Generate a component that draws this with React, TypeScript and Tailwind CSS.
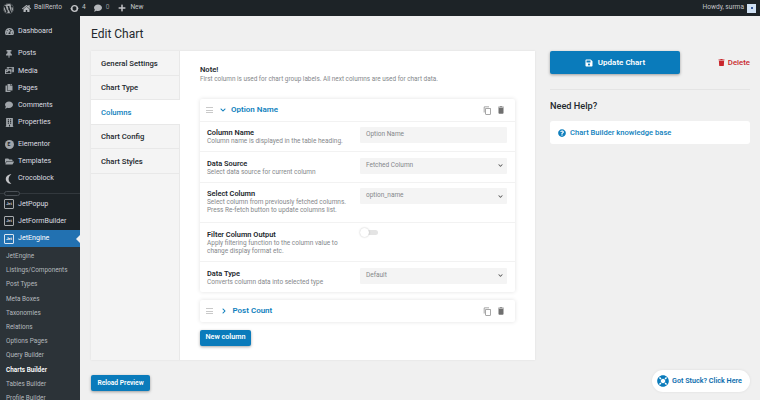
import { ReactNode } from "react";
import {
  FaWordpress,
  FaHome,
  FaComment,
  FaPlus,
  FaThumbtack,
  FaPhotoVideo,
  FaFolderOpen,
  FaBuilding,
  FaSave,
  FaQuestionCircle,
  FaTrash,
  FaCopy,
  FaTachometerAlt,
  FaChevronDown,
  FaChevronRight,
  FaLifeRing,
} from "react-icons/fa";
import { MdContentCopy, MdDelete } from "react-icons/md";

const sans = "font-['Roboto',sans-serif]";

function JetBox({ light }: { light?: boolean }) {
  return (
    <span
      className={
        "flex h-[10px] w-[10px] items-center justify-center rounded-[1px] border text-[4px] leading-none font-bold " +
        (light ? "border-[#dbe6f0] text-white" : "border-[#a7aaad] text-[#c3c4c7]")
      }
    >
      Jet
    </span>
  );
}

function MenuItem({ icon, label, active }: { icon: ReactNode; label: string; active?: boolean }) {
  return (
    <div
      className={
        "relative flex h-[17.2px] items-center gap-[4px] pl-[4px] text-[7.1px] " +
        (active ? "bg-[#2271b1] text-white" : "text-[#dcdde0]")
      }
    >
      <span className="flex w-[10px] justify-center text-[#a0a5aa]">{icon}</span>
      <span>{label}</span>
      {active && (
        <span className="absolute top-[5px] right-0 h-0 w-0 border-y-[4px] border-r-[4px] border-y-transparent border-r-[#f0f0f1]" />
      )}
    </div>
  );
}

function Sidebar() {
  const sub = [
    "JetEngine",
    "Listings/Components",
    "Post Types",
    "Meta Boxes",
    "Taxonomies",
    "Relations",
    "Options Pages",
    "Query Builder",
    "Charts Builder",
    "Tables Builder",
    "Profile Builder",
  ];
  return (
    <aside className="w-[80px] shrink-0 bg-[#1d2327] pt-[7px]">
      <MenuItem icon={<FaTachometerAlt size={9} />} label="Dashboard" />
      <div className="mt-[5px]">
        <MenuItem icon={<FaThumbtack size={8} />} label="Posts" />
        <MenuItem icon={<FaPhotoVideo size={9} />} label="Media" />
        <MenuItem icon={<FaCopy size={8} />} label="Pages" />
        <MenuItem icon={<FaComment size={8} />} label="Comments" />
        <MenuItem icon={<FaBuilding size={9} />} label="Properties" />
      </div>
      <div className="mt-[4.5px]">
        <MenuItem
          icon={
            <span className="flex h-[9px] w-[9px] items-center justify-center rounded-full bg-[#a0a5aa] text-[5px] leading-none font-bold text-[#1d2327]">
              E
            </span>
          }
          label="Elementor"
        />
        <MenuItem icon={<FaFolderOpen size={9} />} label="Templates" />
        <MenuItem
          icon={
            <svg viewBox="0 0 10 12" className="h-[10px] w-[8px] text-[#c3c4c7]" fill="currentColor">
              <path d="M8 0C3.5 0 1 3 1 6s2.500 6 7 6c-2-1.500-3.500-3.500-3.500-6S6 1.500 8 0z" />
            </svg>
          }
          label="Crocoblock"
        />
      </div>
      <div className="relative mt-[3.5px] h-[5px]">
        <div className="absolute top-[2px] right-0 left-0 h-px bg-[#32383d]" />
        <span className="absolute top-0 left-[4px] h-[5px] w-[16px] rounded-full border border-[#4a5056] bg-[#1d2327]" />
      </div>
      <div>
        <MenuItem icon={<JetBox />} label="JetPopup" />
        <MenuItem icon={<JetBox />} label="JetFormBuilder" />
        <MenuItem icon={<JetBox light />} label="JetEngine" active />
      </div>
      <div className="bg-[#2c3338] pt-[2.5px] pb-2">
        {sub.map((s) => (
          <div
            key={s}
            className={
              "flex h-[14.2px] items-center pl-[6px] text-[6.4px] " +
              (s === "Charts Builder" ? "font-semibold text-white" : "text-[#b4b9be]")
            }
          >
            {s}
          </div>
        ))}
      </div>
    </aside>
  );
}

function TopBar() {
  return (
    <header className="flex h-[16px] shrink-0 items-center bg-[#1d2327] text-[6.6px] text-[#c3c4c7]">
      <FaWordpress size={11} className="ml-[3px] text-[#a7aaad]" />
      <FaHome size={9} className="ml-[8px] text-[#b4b7bb]" />
      <span className="ml-[3px]">BaliRento</span>
      <svg viewBox="0 0 10 10" className="ml-[8px] h-[9px] w-[9px] text-[#c3c4c7]" fill="none" stroke="currentColor">
        <circle cx="5" cy="5" r="3.2" strokeWidth="1.6" />
        <path d="M0 5l1.800 1.600L3.200 5zM10 5L8.200 3.400 6.800 5z" fill="currentColor" stroke="none" />
      </svg>
      <span className="ml-[3px]">4</span>
      <FaComment size={8} className="ml-[8px] text-[#b4b7bb]" />
      <span className="ml-[4px] text-[#8c8f94]">0</span>
      <FaPlus size={8} className="ml-[9px] text-[#c3c4c7]" />
      <span className="ml-[4px]">New</span>
      <span className="ml-auto">Howdy, surma</span>
      <span className="mr-[4px] ml-[3px] flex h-[9px] w-[9px] items-center justify-center bg-[#cfe0f3]">
        <span className="h-[2px] w-[2px] bg-[#3b5c9c]" />
      </span>
    </header>
  );
}

function Tabs() {
  const tabs = ["General Settings", "Chart Type", "Columns", "Chart Config", "Chart Styles"];
  return (
    <nav className="w-[89px] shrink-0 border-r border-[#e8e8e8] bg-[#f4f4f4]">
      {tabs.map((t) => (
        <div
          key={t}
          className={
            "flex h-[24.5px] items-center border-b border-[#e8e8e8] pt-[1.5px] pl-[10px] text-[7.7px] font-medium " +
            (t === "Columns" ? "mr-[-1px] bg-white text-[#0f7fbd]" : "text-[#23282d]")
          }
        >
          {t}
        </div>
      ))}
    </nav>
  );
}

function Row({
  title,
  desc,
  children,
  className,
}: {
  title: string;
  desc: string[];
  children: ReactNode;
  className: string;
}) {
  return (
    <div className={"flex items-start border-t border-[#f2f2f2] pr-[8px] pl-[7px] " + className}>
      <div className="mt-[1px] w-[153px] shrink-0">
        <div className="text-[7.4px] leading-[9px] font-semibold text-[#23282d]">{title}</div>
        {desc.map((d) => (
          <div key={d} className="text-[6.5px] leading-[8px] text-[#85888b]">
            {d}
          </div>
        ))}
      </div>
      {children}
    </div>
  );
}

function Field({ value, select }: { value: string; select?: boolean }) {
  return (
    <div className="flex h-[16px] w-[147px] items-center justify-between rounded-[1px] bg-[#f4f4f4] pr-[4px] pl-[6px] text-[6.500px] text-[#85888b]">
      <span>{value}</span>
      {select && <FaChevronDown size={5} className="text-[#555]" />}
    </div>
  );
}

function ColumnHeader({ name, open }: { name: string; open?: boolean }) {
  return (
    <div className="flex h-[22px] items-center pr-[9px] pl-[6px]">
      <span className="flex h-[6px] w-[6.5px] flex-col justify-between">
        <span className="h-px bg-[#c9c9c9]" />
        <span className="h-px bg-[#c9c9c9]" />
        <span className="h-px bg-[#c9c9c9]" />
      </span>
      {open ? (
        <FaChevronDown size={6} className="ml-[7px] text-[#0f7fbd]" />
      ) : (
        <FaChevronRight size={6} className="ml-[8px] text-[#0f7fbd]" />
      )}
      <span className={"text-[8px] font-semibold text-[#0f7fbd] " + (open ? "ml-[5.5px]" : "ml-[6px]")}>{name}</span>
      <MdContentCopy size={9} className="ml-auto text-[#8a8a8a]" />
      <MdDelete size={10} className="ml-[4px] text-[#6f6f6f]" />
    </div>
  );
}

function Columns() {
  return (
    <section className="flex-1 bg-white pt-[14px] pr-[20px] pl-[20px]">
      <div className="text-[7.6px] leading-[10px] font-semibold text-[#23282d]">Note!</div>
      <div className="text-[6.4px] leading-[9px] text-[#85888b]">
        First column is used for chart group labels. All next columns are used for chart data.
      </div>
      <div className="mt-[15px] rounded-[2px] bg-white shadow-[0_0_4px_rgba(0,0,0,0.12)]">
        <ColumnHeader name="Option Name" open />
        <Row title="Column Name" desc={["Column name is displayed in the table heading."]} className="h-[30px] pt-[5px]">
          <Field value="Option Name" />
        </Row>
        <Row title="Data Source" desc={["Select data source for current column"]} className="h-[31px] pt-[5.5px]">
          <Field value="Fetched Column" select />
        </Row>
        <Row
          title="Select Column"
          desc={["Select column from previously fetched columns.", "Press Re-fetch button to update columns list."]}
          className="h-[40px] pt-[5px]"
        >
          <Field value="option_name" select />
        </Row>
        <Row
          title="Filter Column Output"
          desc={["Apply filtering function to the column value to", "change display format etc."]}
          className="h-[39px] pt-[5.5px]"
        >
          <div className="relative mt-[1px] h-[5px] w-[18px] rounded-full bg-[#e4e4e4]">
            <span className="absolute top-[-2px] left-0 h-[9px] w-[9px] rounded-full bg-white shadow-[0_0_2px_rgba(0,0,0,0.25)]" />
          </div>
        </Row>
        <Row title="Data Type" desc={["Converts column data into selected type"]} className="h-[31px] pt-[5.5px]">
          <Field value="Default" select />
        </Row>
      </div>
      <div className="mt-[8px] rounded-[2px] bg-white shadow-[0_0_4px_rgba(0,0,0,0.12)]">
        <ColumnHeader name="Post Count" />
      </div>
      <button className="mt-[7.5px] flex h-[16px] w-[51px] items-center justify-center rounded-[2px] bg-[#0a7bbb] text-[7.2px] font-semibold text-white shadow-[0_1px_3px_rgba(0,0,0,0.35)]">
        New column
      </button>
    </section>
  );
}

function Side() {
  return (
    <div className="ml-[15px] w-[200px] shrink-0">
      <div className="flex items-center">
        <button className="flex h-[23px] w-[130px] items-center justify-center gap-[5px] rounded-[2px] bg-[#0a7bbb] text-[8px] font-semibold text-white shadow-[0_1px_3px_rgba(0,0,0,0.35)]">
          <FaSave size={8} />
          Update Chart
        </button>
        <span className="ml-auto flex items-center gap-[3px] text-[7.8px] font-medium text-[#c9262c]">
          <FaTrash size={7} />
          Delete
        </span>
      </div>
      <div className="mt-[15px] h-px bg-[#e4e4e4]" />
      <div className="mt-[10px] text-[9.2px] leading-[12px] font-medium text-[#23282d]">Need Help?</div>
      <div className="mt-[9px] flex h-[23px] items-center gap-[4px] rounded-[3px] bg-white pl-[8px] text-[7.6px] font-medium text-[#0f7fbd]">
        <FaQuestionCircle size={8} />
        Chart Builder knowledge base
      </div>
    </div>
  );
}

export default function App() {
  return (
    <div className={"relative flex h-[400px] w-[760px] flex-col overflow-hidden " + sans}>
      <TopBar />
      <div className="flex min-h-0 flex-1">
        <Sidebar />
        <main className="flex-1 bg-[#f0f0f0] pr-[10px] pl-[11px]">
          <h1 className="flex h-[35px] items-center text-[12px] text-[#23282d]">Edit Chart</h1>
          <div className="flex">
            <div className="flex h-[309px] w-[444px] shrink-0 shadow-[0_0_2px_rgba(0,0,0,0.08)]">
              <Tabs />
              <Columns />
            </div>
            <Side />
          </div>
          <button className="mt-[15px] flex h-[16px] w-[59px] items-center justify-center rounded-[2px] bg-[#0a7bbb] text-[6.7px] font-semibold text-white shadow-[0_1px_3px_rgba(0,0,0,0.35)]">
            Reload Preview
          </button>
        </main>
      </div>
      <div className="absolute top-[370px] left-[652px] flex h-[22px] w-[98px] items-center gap-[3px] rounded-full bg-white pl-[5px] text-[7.2px] font-semibold text-[#0a6cad] shadow-[0_0_3px_rgba(0,0,0,0.08)]">
        <FaLifeRing size={12} className="text-[#0a7bbb]" />
        Got Stuck? Click Here
      </div>
    </div>
  );
}
